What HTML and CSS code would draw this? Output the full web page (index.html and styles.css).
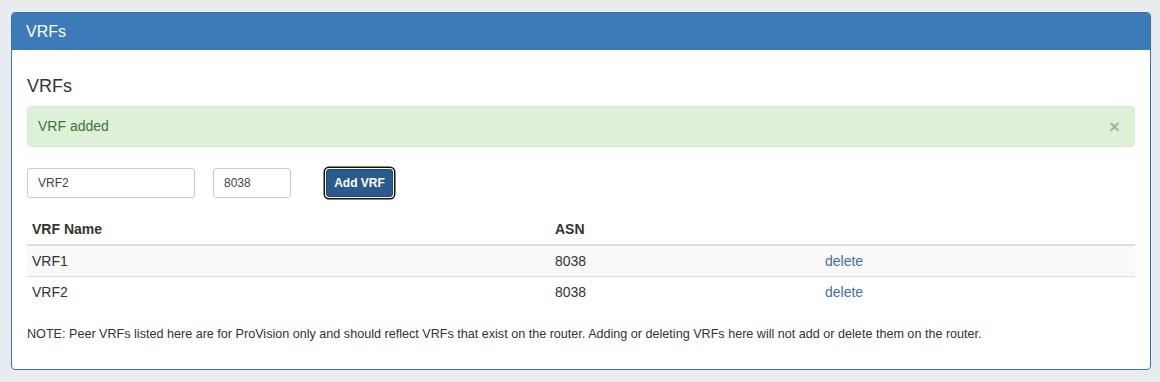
FILE: index.html
```html
<!DOCTYPE html>
<html>
<head>
<meta charset="utf-8">
<link rel="stylesheet" href="styles.css">
</head>
<body>
<div class="page">
  <div class="panel">
    <div class="panel-heading">VRFs</div>
    <div class="panel-body">
      <h3 class="title">VRFs</h3>
      <div class="alert">
        <span>VRF added</span>
        <span class="close">×</span>
      </div>
      <form class="add-form">
        <input class="input input-name" type="text" value="VRF2">
        <input class="input input-asn" type="text" value="8038">
        <button class="btn" type="button">Add VRF</button>
      </form>
      <table class="table">
        <thead>
          <tr><th class="c1">VRF Name</th><th class="c2">ASN</th><th class="c3"></th></tr>
        </thead>
        <tbody>
          <tr class="odd"><td>VRF1</td><td>8038</td><td><a class="link">delete</a></td></tr>
          <tr><td>VRF2</td><td>8038</td><td><a class="link">delete</a></td></tr>
        </tbody>
      </table>
      <p class="note">NOTE: Peer VRFs listed here are for ProVision only and should reflect VRFs that exist on the router. Adding or deleting VRFs here will not add or delete them on the router.</p>
    </div>
  </div>
</div>
</body>
</html>
```

FILE: styles.css
```css
html, body {
  margin: 0;
  padding: 0;
  background: #e9ecef;
  font-family: "Liberation Sans", Arial, sans-serif;
  color: #333;
}
.page {
  padding: 12px 9px 12px 11px;
}
.panel {
  background: #fff;
  border: 1px solid #3b74ad;
  border-radius: 4px;
  overflow: hidden;
  height: 358px;
  box-sizing: border-box;
}
.panel-heading {
  background: #3d7ab8;
  color: #fff;
  font-size: 16px;
  line-height: 18px;
  padding: 10px 14px 9px;
}
.panel-body {
  padding: 0 15px 0 15px;
}
.title {
  margin: 0;
  padding-top: 25px;
  font-size: 18px;
  font-weight: normal;
  line-height: 22px;
  color: #333;
}
.alert {
  margin-top: 9px;
  background: #dff0d8;
  border: 1px solid #d6e9c6;
  border-radius: 4px;
  color: #3c763d;
  font-size: 14px;
  line-height: 19px;
  padding: 10px 14px 10px 10px;
  display: flex;
  justify-content: space-between;
  align-items: center;
}
.close {
  font-size: 19px;
  font-weight: bold;
  color: #000;
  opacity: 0.25;
  line-height: 19px;
}
.add-form {
  margin: 21px 0 0 0;
  display: flex;
  align-items: center;
}
.input {
  box-sizing: border-box;
  height: 30px;
  border: 1px solid #ccc;
  border-radius: 3px;
  font-family: "Liberation Sans", Arial, sans-serif;
  font-size: 12px;
  color: #444;
  padding: 0 10px;
  margin: 0;
  background: #fff;
}
.input-name { width: 168px; }
.input-asn { width: 78px; margin-left: 18px; }
.btn {
  margin-left: 35px;
  box-sizing: border-box;
  height: 28px;
  width: 67px;
  background: #2b5a8c;
  border: 1px solid #1f4670;
  border-radius: 3px;
  color: #fff;
  font-family: "Liberation Sans", Arial, sans-serif;
  font-size: 12px;
  font-weight: bold;
  padding: 0;
  box-shadow: 0 0 0 1px #fff, 0 0 0 2.5px #111;
}
.table {
  width: 100%;
  table-layout: fixed;
  border-collapse: collapse;
  margin-top: 16px;
  font-size: 14px;
}
.table th, .table td {
  text-align: left;
  padding: 5px 5px;
  line-height: 20px;
}
.table th {
  font-weight: bold;
  border-bottom: 2px solid #ddd;
}
.table td {
  border-top: 1px solid #ddd;
}
.table tbody tr:first-child td { border-top: 0; }
.table tr.odd { background: #f9f9f9; }
.c1 { width: 513px; }
.c2 { width: 260px; }
.link { color: #46709f; text-decoration: none; }
.note {
  margin: 19px 0 0 0;
  font-size: 12.6px;
  line-height: 16px;
  color: #333;
}
```
